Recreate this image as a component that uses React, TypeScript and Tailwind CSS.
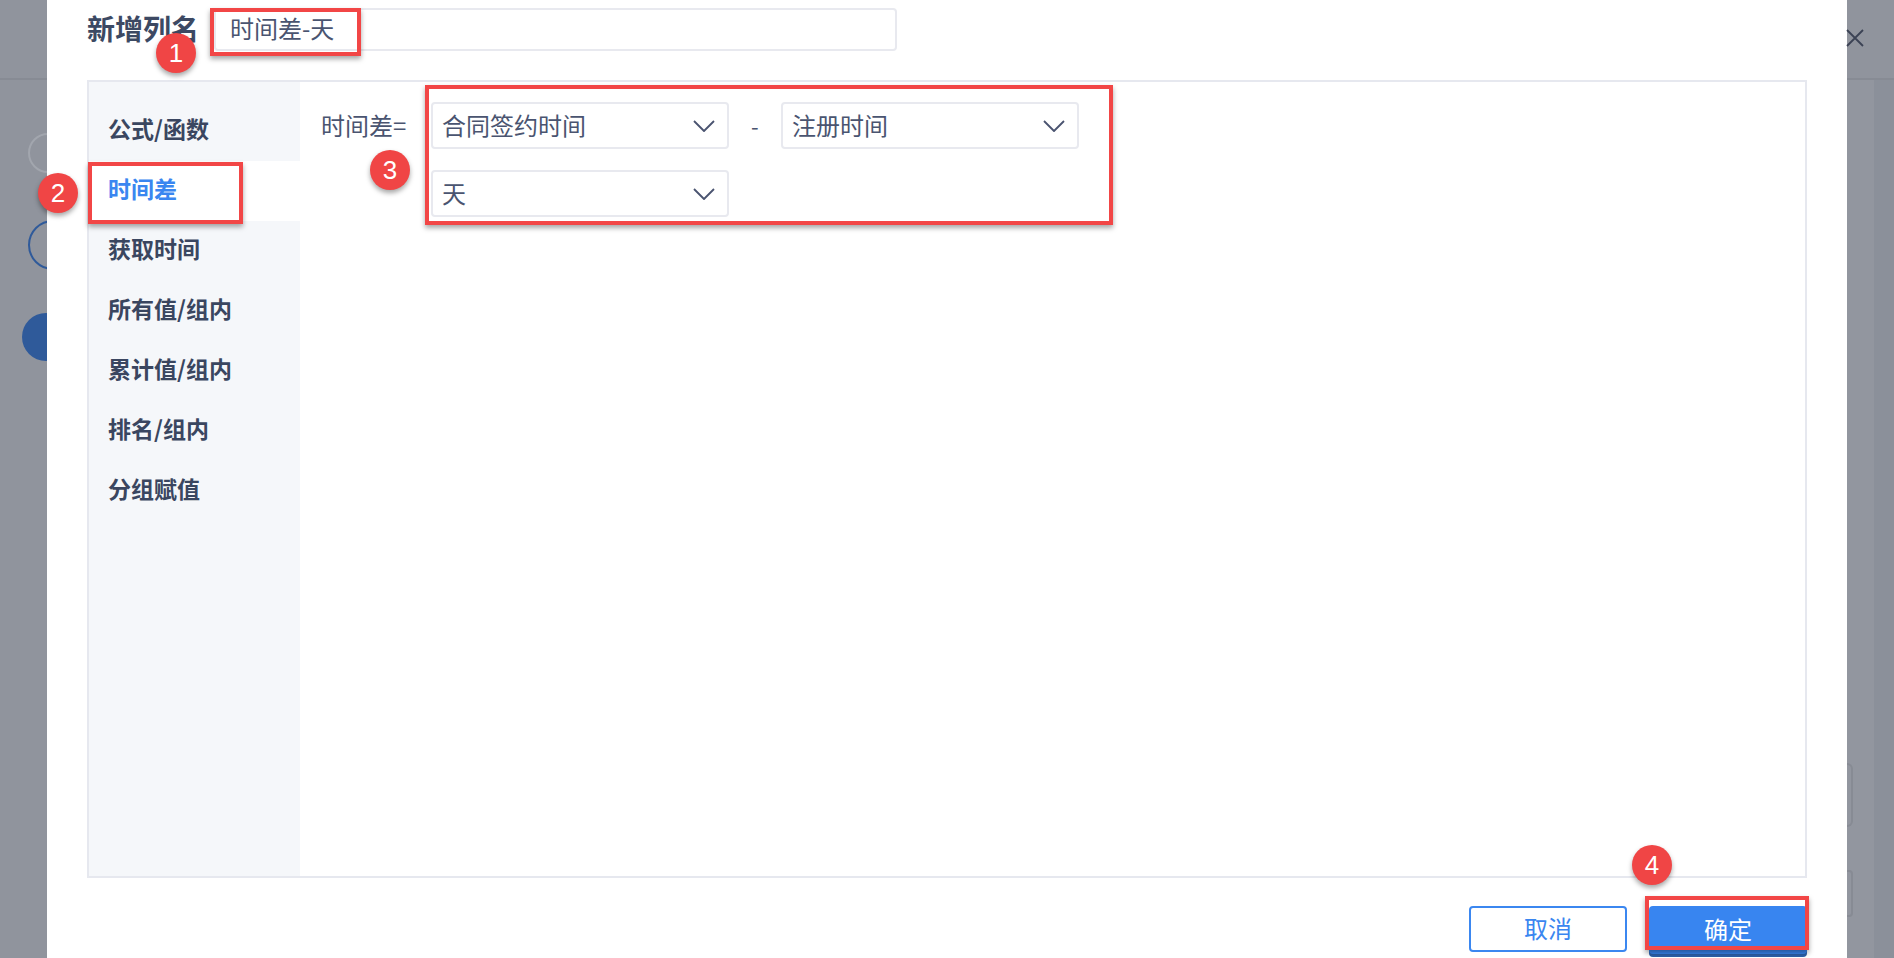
import React from 'react';

const navItems = ['公式/函数', '时间差', '获取时间', '所有值/组内', '累计值/组内', '排名/组内', '分组赋值'];

const Chevron: React.FC = () => (
  <svg width="22" height="12" viewBox="0 0 22 12" fill="none">
    <path d="M1 1l10 10L21 1" stroke="#4a5470" strokeWidth="1.8" strokeLinejoin="round" />
  </svg>
);

const Select: React.FC<{ value: string }> = ({ value }) => (
  <div className="flex h-[47px] w-[298px] items-center justify-between rounded-[4px] border-2 border-[#e8e9ef] bg-white pl-[9px] pr-[12px]">
    <span className="pb-[2px] text-[24px] text-[#4a5470]">{value}</span>
    <Chevron />
  </div>
);

const Badge: React.FC<{ n: number; className: string }> = ({ n, className }) => (
  <div
    className={
      'absolute flex h-[40px] w-[40px] items-center justify-center rounded-full bg-[#f04545] text-[26px] leading-none text-white shadow-[0_3px_5px_rgba(0,0,0,0.35)] ' +
      className
    }
    style={{ fontFamily: '"Liberation Sans", Arial, sans-serif' }}
  >
    {n}
  </div>
);

const App: React.FC = () => {
  return (
    <div
      className="relative flex h-[958px] w-[1894px] overflow-hidden bg-[#90949d]"
      style={{ fontFamily: '"Noto Sans CJK SC", "Noto Sans", sans-serif' }}
    >
      {/* page behind the mask, left side */}
      <div className="flex w-[47px] flex-col">
        <div className="h-[80px] border-b-2 border-[#878b94]" />
        <div className="ml-[28px] mt-[53px] h-[40px] w-[40px] rounded-full border-2 border-[#a2a6ae]" />
        <div className="ml-[28px] mt-[47px] h-[50px] w-[50px] rounded-full border-2 border-[#2f5a9a]" />
        <div className="ml-[22px] mt-[43px] h-[48px] w-[48px] rounded-full bg-[#2f5a9a]" />
      </div>

      {/* dialog */}
      <div className="flex w-[1800px] flex-col bg-white px-[40px]">
        <div className="mt-[8px] flex h-[42px] items-center">
          <span className="w-[112px] whitespace-nowrap pb-[2px] text-[28px] font-bold text-[#3c4963]">新增列名</span>
          <div className="ml-[15px] flex h-[43px] w-[683px] items-center rounded-[4px] border-2 border-[#e8e9ef] pb-[2px] pl-[14px] text-[24px] text-[#4a5470]">
            时间差-天
          </div>
        </div>

        <div className="mt-[30px] flex h-[798px] border-2 border-[#e6e8ef]">
          <div className="flex w-[211px] flex-col bg-[#f5f7fa] pt-[19px]">
            {navItems.map((item) => (
              <div
                key={item}
                className={
                  'flex h-[60px] items-center pb-[5px] pl-[19px] text-[23px] font-bold ' +
                  (item === '时间差' ? 'bg-white text-[#3a86f0]' : 'text-[#3a4660]')
                }
              >
                {item}
              </div>
            ))}
          </div>
          <div className="flex flex-1 flex-col gap-[21px] pl-[21px] pt-[20px]">
            <div className="flex items-center">
              <span className="w-[110px] pb-[2px] text-[24px] text-[#4a5470]">时间差=</span>
              <Select value="合同签约时间" />
              <span className="w-[52px] pl-[22px] text-[22px] text-[#4a5470]">-</span>
              <Select value="注册时间" />
            </div>
            <div className="flex pl-[110px]">
              <Select value="天" />
            </div>
          </div>
        </div>

        <div className="mt-[28px] flex justify-end gap-[22px]">
          <button className="flex h-[46px] w-[158px] items-center justify-center rounded-[4px] border-2 border-[#3b87f0] bg-white pb-[2px] text-[24px] text-[#3a86f0]">
            取消
          </button>
          <button className="flex h-[48px] w-[158px] items-center justify-center rounded-[4px] bg-[#3885f0] pb-[2px] text-[24px] text-white shadow-[0_3px_0_#2b5fa8]">
            确定
          </button>
        </div>
      </div>

      {/* page behind the mask, right side */}
      <div className="flex flex-1 flex-col">
        <div className="flex h-[80px] items-start border-b-2 border-[#878b94] pt-[28px]">
          <svg width="20" height="20" viewBox="0 0 20 20" className="-ml-[2px]">
            <path d="M2 2l16 16M18 2L2 18" stroke="#3b4254" strokeWidth="1.8" />
          </svg>
        </div>
        <div className="flex flex-1">
          <div className="w-[27px] bg-[#92969f]">
            <div className="mt-[683px] h-[64px] w-[6px] rounded-r-[6px] border-2 border-l-0 border-[#878b94]" />
            <div className="mt-[43px] h-[47px] w-[6px] rounded-r-[4px] border-2 border-l-0 border-[#878b94]" />
          </div>
          <div className="flex-1 bg-[#8b909a]" />
        </div>
      </div>

      {/* annotations */}
      <div className="pointer-events-none absolute left-[210px] top-[8px] h-[48px] w-[151px] border-[4px] border-[#f24646] shadow-[0_3px_5px_rgba(0,0,0,0.35)]" />
      <div className="pointer-events-none absolute left-[88px] top-[162px] h-[62px] w-[155px] border-[4px] border-[#f24646] shadow-[0_3px_5px_rgba(0,0,0,0.35)]" />
      <div className="pointer-events-none absolute left-[425px] top-[85px] h-[140px] w-[688px] border-[4px] border-[#f24646] shadow-[0_3px_5px_rgba(0,0,0,0.35)]" />
      <div className="pointer-events-none absolute left-[1645px] top-[896px] h-[54px] w-[164px] border-[4px] border-[#f24646] shadow-[0_3px_5px_rgba(0,0,0,0.35)]" />

      <Badge n={1} className="left-[156px] top-[33px]" />
      <Badge n={2} className="left-[38px] top-[173px]" />
      <Badge n={3} className="left-[370px] top-[150px]" />
      <Badge n={4} className="left-[1632px] top-[845px]" />
    </div>
  );
};

export default App;
